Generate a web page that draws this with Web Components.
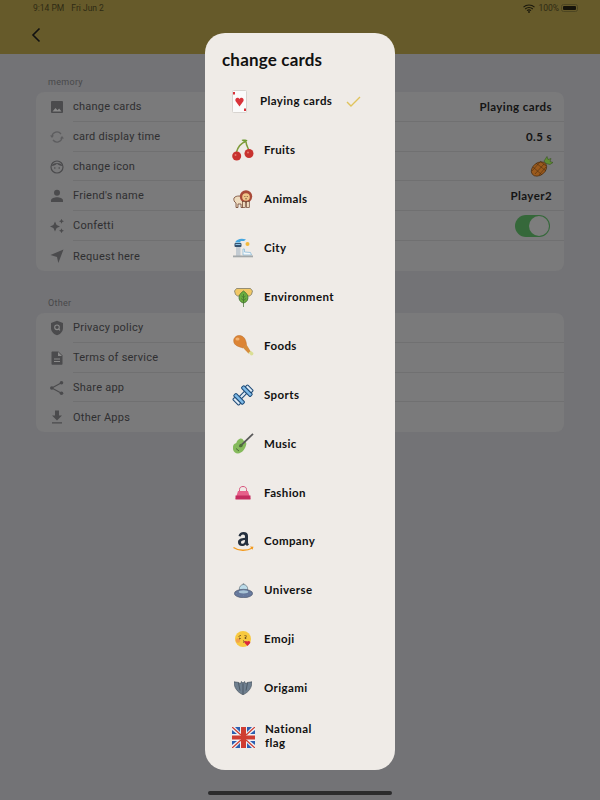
<!DOCTYPE html>
<html><head><meta charset="utf-8"><style>
html,body{margin:0;padding:0;width:600px;height:800px;overflow:hidden;background:#737376}
body{font-family:Roboto,"Liberation Sans",sans-serif}
</style></head><body>
<settings-screen>
  <settings-section title="memory">
    <settings-row icon="image" label="change cards" value="Playing cards"></settings-row>
    <settings-row icon="sync" label="card display time" value="0.5 s"></settings-row>
    <settings-row icon="face" label="change icon" extra="pineapple"></settings-row>
    <settings-row icon="person" label="Friend's name" value="Player2"></settings-row>
    <settings-row icon="sparkle" label="Confetti" extra="toggle"></settings-row>
    <settings-row icon="nav" label="Request here" last></settings-row>
  </settings-section>
  <settings-section title="Other">
    <settings-row icon="shield" label="Privacy policy"></settings-row>
    <settings-row icon="doc" label="Terms of service"></settings-row>
    <settings-row icon="share" label="Share app"></settings-row>
    <settings-row icon="download" label="Other Apps" last></settings-row>
  </settings-section>
</settings-screen>
<card-picker heading="change cards">
  <picker-option icon="card" gap="13" checked>Playing cards</picker-option>
  <picker-option icon="cherry">Fruits</picker-option>
  <picker-option icon="lion">Animals</picker-option>
  <picker-option icon="city">City</picker-option>
  <picker-option icon="leaf">Environment</picker-option>
  <picker-option icon="chicken">Foods</picker-option>
  <picker-option icon="dumbbell">Sports</picker-option>
  <picker-option icon="guitar">Music</picker-option>
  <picker-option icon="bag">Fashion</picker-option>
  <picker-option icon="amazon">Company</picker-option>
  <picker-option icon="ufo">Universe</picker-option>
  <picker-option icon="kiss">Emoji</picker-option>
  <picker-option icon="bat">Origami</picker-option>
  <picker-option icon="flag" wrap>National flag</picker-option>
</card-picker>
<script>
const G='#4b4b4d';
const rowIcons={
image:`<svg width="16" height="16" viewBox="0 0 16 16"><rect x="2" y="2" width="12" height="12" rx="1" fill="${G}"/><path d="M3.500 12.500 6.500 9l2 2.200 1.600-1.600 2.400 2.900z" fill="#8a8a8a"/></svg>`,
sync:`<svg width="16" height="16" viewBox="0 0 16 16" fill="none" stroke="#5d5d5f" stroke-width="1.300"><path d="M3 7.500A5 5 0 0 1 12 5"/><path d="M13 8.500A5 5 0 0 1 4 11"/><path d="M1 6.500h4L3 9zM15 9.500h-4l2-2.500z" fill="#5d5d5f" stroke="none"/></svg>`,
face:`<svg width="16" height="16" viewBox="0 0 16 16" fill="none" stroke="${G}" stroke-width="1.200"><circle cx="8" cy="8" r="6"/><path d="M2.200 7C4 3 12 3 13.800 7 11 7 9 5.700 8 4.500 7 5.700 5 7 2.200 7z" fill="${G}" stroke="none"/><circle cx="5.800" cy="9" r=".8" fill="${G}" stroke="none"/><circle cx="10.200" cy="9" r=".8" fill="${G}" stroke="none"/></svg>`,
person:`<svg width="16" height="16" viewBox="0 0 16 16" fill="${G}"><circle cx="8" cy="4.800" r="3"/><path d="M2 14v-1.500C2 10.300 5.500 9.300 8 9.300s6 1 6 3.200V14z"/></svg>`,
sparkle:`<svg width="16" height="16" viewBox="0 0 16 16" fill="${G}"><path d="M6 3.500 7.600 7 11 8.500 7.600 10 6 13.500 4.400 10 1 8.500 4.400 7z"/><path d="M12.500 .8l.8 1.700 1.700.8-1.700.8-.8 1.700-.8-1.700-1.700-.8 1.700-.8zM12.500 10.300l.8 1.700 1.700.8-1.700.8-.8 1.700-.8-1.700-1.700-.8 1.700-.8z"/></svg>`,
nav:`<svg width="16" height="16" viewBox="0 0 16 16" fill="${G}"><path d="M14.500 1.500 9.300 15 8 9 1.500 7z"/></svg>`,
shield:`<svg width="16" height="16" viewBox="0 0 16 16"><path d="M8 .8 14 3v5c0 3.500-2.600 6.200-6 7.200C4.600 14.200 2 11.500 2 8V3z" fill="${G}"/><circle cx="8" cy="7.300" r="2.300" fill="none" stroke="#8a8a8a" stroke-width="1.100"/><path d="M9.600 9l1.400 1.400" stroke="#8a8a8a" stroke-width="1.100"/></svg>`,
doc:`<svg width="16" height="16" viewBox="0 0 16 16"><path d="M3.500 1.500h6L13.500 5.500v8.300c0 .7-.5 1-1 1h-9c-.5 0-1-.4-1-1V2.500c0-.6.500-1 1-1z" fill="${G}"/><path d="M5 9h6M5 11.500h6" stroke="#8a8a8a" stroke-width="1.100"/><path d="M9 2v4h4" fill="#8a8a8a"/></svg>`,
share:`<svg width="16" height="16" viewBox="0 0 16 16" fill="${G}"><circle cx="12.500" cy="2.800" r="1.800"/><circle cx="12.500" cy="13.200" r="1.800"/><circle cx="2.800" cy="8" r="1.800"/><path d="M2.800 8 12.500 2.800M2.800 8l9.700 5.200" stroke="${G}" stroke-width="1.100"/></svg>`,
download:`<svg width="16" height="16" viewBox="0 0 16 16" fill="${G}"><path d="M6 1.500h4v5h3L8 11.500 3 6.500h3zM3 13.200h10v1.300H3z"/></svg>`
};
const pickIcons={
card:`<svg width="15" height="23" viewBox="0 0 15 23"><rect x=".5" y=".5" width="14" height="22" rx="1" fill="#fbfbfb" stroke="#d8d4d0"/><path d="M7.500 16.500 3.500 11C2.500 8 6 6.500 7.500 9 9 6.500 12.500 8 11.500 11z" fill="#d9333a"/><rect x="1" y="2" width="2" height="2.500" fill="#d9333a"/><rect x="12" y="18.500" width="2" height="2.500" fill="#d9333a"/></svg>`,
cherry:`<svg width="22" height="22" viewBox="0 0 22 22" fill="none"><path d="M14 2.500C9 4 6 8 4.500 13" stroke="#7f9b3a" stroke-width="1.500"/><path d="M14 2.500c0 4 2 6 3.500 10" stroke="#7f9b3a" stroke-width="1.500"/><path d="M9.500 1c2-.8 5-.6 6 .5-1.500 2-4.500 1.500-6-.5z" fill="#6f9c35"/><circle cx="4.700" cy="17" r="4.500" fill="#c8322f"/><circle cx="17" cy="14.500" r="4.500" fill="#c8322f"/><circle cx="3.500" cy="16" r="1" fill="#e47a6e"/><circle cx="16" cy="13.500" r="1" fill="#e47a6e"/></svg>`,
lion:`<svg width="20" height="18" viewBox="0 0 20 18"><path d="M1 8c1-1.500 3-2 5-2h5v8h-1v3.500H8V14H5v3.500H3V13C1 12 .5 9.500 1 8z" fill="#efdcc0" stroke="#6e4230" stroke-width=".8"/><circle cx="13" cy="6.500" r="6.200" fill="#a84a38"/><circle cx="13" cy="7" r="3.800" fill="#efc58a"/><rect x="9.500" y="11.500" width="2.800" height="6" fill="#efdcc0" stroke="#6e4230" stroke-width=".7"/><rect x="13.500" y="11.500" width="2.800" height="6" fill="#efdcc0" stroke="#6e4230" stroke-width=".7"/><path d="M11.500 6.500h.8M13.800 6.500h.8M12.400 8.800h1.300" stroke="#4d2e20" stroke-width=".9"/></svg>`,
city:`<svg width="20" height="20" viewBox="0 0 20 20"><path d="M2 4.500C4 .5 9 0 13 1.500l-2 1.500H7.500v1.500z" fill="#45a6e0"/><rect x="1.500" y="5" width="7" height="4" rx="1" fill="#34506e"/><rect x="2.500" y="6" width="5" height="1" fill="#8fc4e6"/><rect x="3" y="9" width="4.500" height="9" fill="#c3cbd2"/><circle cx="14.500" cy="6" r="2" fill="#f5b93a"/><path d="M10 11h1.500v3l6 .5 1 2.500H10z" fill="#f4f8fa" stroke="#7fb5d6" stroke-width=".7"/><rect y="17.500" width="20" height="1.800" fill="#a3a8aa"/></svg>`,
leaf:`<svg width="19" height="19" viewBox="0 0 19 19"><path d="M2.500.5h14l2 2.500-1 3.500-2 1.500h-12L1.500 6.500.5 3z" fill="#f1c866" stroke="#7d7a66" stroke-width=".8"/><path d="M9.500 3c3 2 5 4.500 4.300 8-.5 2.300-2.300 3.500-4.300 4-2-.5-3.800-1.700-4.300-4C4.500 7.500 6.500 5 9.500 3z" fill="#6bae3f" stroke="#3d6f2e" stroke-width=".8"/><path d="M9.500 6v13M9.500 9.500 7.500 8M9.500 9.500l2-1.500M9.500 12.500l-2.500-2M9.500 12.500l2.500-2" stroke="#3d6f2e" stroke-width=".7" fill="none"/></svg>`,
chicken:`<svg width="21" height="21" viewBox="0 0 21 21"><path d="M.7 6C.5 2 4.500-.3 8 .8 12 2 13 6 13.500 9.500L10 13C6 11.500 1 11 .7 6z" fill="#dc8435" stroke="#b86a28" stroke-width=".5"/><path d="M10 12.800 13.500 9.500l4.500 7.500-2.500 1.500z" fill="#d68c3c"/><ellipse cx="4.500" cy="4" rx="2" ry="1.500" fill="#f2b272"/><path d="M15.500 17.500l2.500-1.500 2.500 2-.5 2-2 .5z" fill="#dadf95"/></svg>`,
dumbbell:`<svg width="22" height="22" viewBox="0 0 21 21"><g transform="rotate(-45 10.500 10.500)" stroke="#1e4b78" stroke-width="1"><rect x="7" y="9" width="7" height="3" fill="#dfeaf4"/><rect x="3.500" y="4.500" width="3.500" height="12" rx="1" fill="#7fbbe8"/><rect x="14" y="4.500" width="3.500" height="12" rx="1" fill="#7fbbe8"/><rect x=".5" y="6.500" width="3" height="8" rx="1" fill="#dfeaf4"/><rect x="17.500" y="6.500" width="3" height="8" rx="1" fill="#dfeaf4"/></g></svg>`,
guitar:`<svg width="21" height="21" viewBox="0 0 21 21"><path d="M6.800 5.800c1.800-.8 3.200.3 3.500 1.800 1.800.2 3.300 1.500 3 3.700C12.600 15.500 9 20.500 5 20.500 1.500 20.500-.5 17-.1 14c.3-2.300 1.800-3.700 3.400-4 .3-1.800 1.700-3.400 3.500-4.200z" fill="#85ba5c"/><path d="M20 .8 6.500 13.800" stroke="#59595a" stroke-width="1.800"/><circle cx="8" cy="12.500" r="1.700" fill="#4c6f37"/><path d="M3 15.500l3 2.500" stroke="#4c6f37" stroke-width="1"/></svg>`,
bag:`<svg width="16" height="14" viewBox="0 0 16 14"><path d="M4.500 5V3.500C4.500 1.500 6 .5 8 .5s3.500 1 3.500 3V5" fill="none" stroke="#d7527b" stroke-width="1"/><path d="M3 5h10l2.500 8H.5z" fill="#e6608a"/><path d="M.5 9.500h15V13.500H.5z" fill="#c42c5f"/></svg>`,
amazon:`<svg width="21" height="21" viewBox="0 0 21 21"><path d="M5.500 5C6 2.500 8 1 10.500 1 13.500 1 15 2.500 15 5v6.500c0 .8.400 1.300 1 2l-2 1.500c-.7-.6-1-1-1.300-1.500-1 1-2.200 1.500-3.700 1.500-2.500 0-4-1.500-4-3.700 0-3 2.600-4 7-4.500V5.500c0-1.300-.8-2-2-2s-2 .7-2.300 2zM12 9C9.500 9.300 8 9.800 8 11.200c0 1 .6 1.600 1.600 1.600 1.600 0 2.400-1.500 2.400-3.800z" fill="#242f3e"/><path d="M.5 16.500c5 3.500 13 3.700 19 .5" fill="none" stroke="#f39a1e" stroke-width="1.400"/><path d="M17 15.500l3.500.2-1 3z" fill="#f39a1e"/></svg>`,
ufo:`<svg width="19" height="15" viewBox="0 0 19 15"><circle cx="9.500" cy="1.200" r=".9" fill="#7e8a93"/><ellipse cx="9.500" cy="6" rx="4.200" ry="4.500" fill="#bcdcea" stroke="#67757f" stroke-width=".7"/><ellipse cx="9.500" cy="10.500" rx="9.200" ry="4.200" fill="#66789c" stroke="#4b5569" stroke-width=".6"/><ellipse cx="9.500" cy="8.800" rx="4.800" ry="1.600" fill="#a8c3d6"/><path d="M2.500 10.500h.1M5.500 12h.1M9.500 12.500h.1M13.500 12h.1M16.500 10.500h.1" stroke="#d8dfe8" stroke-width="1.200"/></svg>`,
kiss:`<svg width="16" height="16" viewBox="0 0 16 16"><circle cx="8" cy="8" r="8" fill="#f8c940"/><circle cx="3" cy="9.500" r="2.200" fill="#f2a24c"/><path d="M3.500 5.500l2.500-1.200M9.500 4.500l2.500.8M4 7l1.500.5-1.500.5" stroke="#6a4a20" stroke-width=".8" fill="none"/><circle cx="10.500" cy="7" r=".9" fill="#6a4a20"/><path d="M8 9.500l1.500 1-1.500 1" stroke="#6a4a20" stroke-width=".8" fill="none"/><path d="M12.500 15l-3-3.300c-.7-1.500 1.500-2.500 2.700-1.200 1.200-1.300 3.500-.3 3 1.500z" fill="#d9263c"/></svg>`,
bat:`<svg width="18" height="14" viewBox="0 0 18 14"><path d="M0 .8 5 1.500 6.500 3 7.300.5 9 2l1.700-1.500.8 2.500L13 1.500l5-.7c0 5-2.500 10-9 13C2.500 10.800 0 5.800 0 .8z" fill="#6f7f8f" stroke="#3e4955" stroke-width=".6"/><path d="M4.500 2l1.500 7.500M13.500 2 12 9.500M9 2.500V13.500" stroke="#3e4955" stroke-width=".7"/></svg>`,
flag:`<svg width="23" height="21" viewBox="0 0 23 21"><rect width="23" height="21" fill="#eef0f4"/><path d="M3 0l5 5V0zM15 0v5l5-5zM0 3l5 4H0zM23 3l-5 4h5zM0 14h5l-5 4zM23 14h-5l5 4zM8 21v-5l-5 5zM15 21v-5l5 5z" fill="#2c5fb0"/><path d="M0 0l9 8M23 0l-9 8M0 21l9-8M23 21l-9-8" stroke="#cf3d32" stroke-width="1.300"/><path d="M9 0h5v21H9zM0 8.500h23v4H0z" fill="#cf3d32"/></svg>`
};
const sheet=(c)=>`<style>${c}</style>`;

class SettingsScreen extends HTMLElement{constructor(){super();this.attachShadow({mode:'open'}).innerHTML=sheet(`
:host{display:block;width:600px;height:800px;position:relative;background:#737376;color:#2b2b2c}
.top{background:#665a2a;height:54px;display:flex;flex-direction:column;box-sizing:border-box}
.status{height:16px;padding:0 22px 0 33px;display:flex;align-items:center;font-size:8.500px;color:#2e2a14}
.status .sp{flex:1}.status .d{margin-left:7px}
.nav{flex:1;display:flex;align-items:center;position:relative;padding:0 0 0 31px}
.nav b{position:absolute;left:0;right:0;text-align:center;font:bold 16px "Lato",sans-serif;color:#1a180c;top:13px}
.body{padding:24px 36px 0;display:flex;flex-direction:column;gap:28px}
.home{position:absolute;left:208px;top:791px;width:184px;height:4px;border-radius:2px;background:#2b2b2c}
.batt{display:inline-flex;width:17px;height:8px;box-sizing:border-box;border:1px solid #4d4622;border-radius:2.500px;padding:1px;margin-left:2px}
.batt i{flex:1;background:#15130a;border-radius:1px}
`)+`<div class="top"><div class="status"><span>9:14 PM</span><span class="d">Fri Jun 2</span><span class="sp"></span>
<svg width="12" height="9" viewBox="0 0 12 9" style="margin-right:3px"><path d="M.5 3.200a8 8 0 0 1 11 0M2.200 5a5.500 5.500 0 0 1 7.600 0M4 6.700a3 3 0 0 1 4 0" fill="none" stroke="#1a180c" stroke-width="1.100"/><circle cx="6" cy="8" r=".9" fill="#1a180c"/></svg>
<span>100%</span><span class="batt"><i></i></span></div>
<div class="nav"><svg width="10" height="16" viewBox="0 0 10 16"><path d="M8.500 1.500 2 8l6.500 6.500" fill="none" stroke="#111" stroke-width="1.600"/></svg><b>Settings</b></div></div>
<div class="body"><slot></slot></div><div class="home"></div>`;}}

class SettingsSection extends HTMLElement{constructor(){super();this.attachShadow({mode:'open'});}
connectedCallback(){this.shadowRoot.innerHTML=sheet(`
:host{display:block}
.t{font-size:9px;letter-spacing:.3px;color:#48484a;height:14px;line-height:9px;padding-left:12px}
.c{background:#7a7a7b;border-radius:8px;overflow:hidden}
`)+`<div class="t">${this.getAttribute('title')}</div><div class="c"><slot></slot></div>`;this.removeAttribute('title');}}

class SettingsRow extends HTMLElement{constructor(){super();this.attachShadow({mode:'open'});}
connectedCallback(){const v=this.getAttribute('value'),x=this.getAttribute('extra');
let right='';
if(v)right=`<span class="v">${v}</span>`;
if(x==='pineapple')right=`<svg width="23" height="21" viewBox="0 0 23 21" style="margin-right:-3px"><path d="M14 5 17 .5l1 3 3-1-1 3 3 1-3 2-4-1z" fill="#5f8d34" stroke="#2f4a1a" stroke-width=".5"/><ellipse cx="9" cy="13" rx="8.500" ry="6.200" transform="rotate(-38 9 13)" fill="#9a5a1d" stroke="#3f260e" stroke-width=".6"/><path d="M3 11l9 8M6 7l10 8M10 5l6 5M2 15l8-9M5 18l9-10M9 19l7-8" stroke="#3f260e" stroke-width=".5"/></svg>`;
if(x==='toggle')right=`<span class="tg"><i></i></span>`;
this.shadowRoot.innerHTML=sheet(`
:host{display:block;height:29.830px}
.r{height:100%;display:flex;align-items:center;padding:0 14px 0 13px;box-sizing:border-box}
.i{width:16px;height:16px;flex:none;margin-right:8px;display:flex}
.m{flex:1;height:100%;display:flex;align-items:center;justify-content:space-between;border-bottom:1px solid #707071;box-sizing:border-box;margin-right:-14px;padding-right:14px;min-width:0}
.l{font:11px Roboto,sans-serif;letter-spacing:.24px;color:#2f2f31}
.v{font:bold 11.500px "Lato",sans-serif;letter-spacing:.42px;color:#141414;margin-right:-2px}
.tg{display:flex;width:35px;height:22px;background:#35683a;border-radius:11px;padding:1px;box-sizing:border-box;justify-content:flex-end}
.tg i{width:20px;height:20px;border-radius:50%;background:#7d7d7d}
${this.hasAttribute('last')?'.m{border-bottom:0}':''}
`)+`<div class="r"><span class="i">${rowIcons[this.getAttribute('icon')]}</span><div class="m"><span class="l">${this.getAttribute('label')}</span>${right}</div></div>`;}}

class CardPicker extends HTMLElement{constructor(){super();this.attachShadow({mode:'open'});}
connectedCallback(){this.shadowRoot.innerHTML=sheet(`
:host{display:block;position:absolute;left:205px;top:33px;width:190px;height:737px;background:#efebe7;border-radius:20px;box-sizing:border-box;padding:17px 0 0 17px}
h2{margin:0;font:bold 17px/20px "Lato",sans-serif;letter-spacing:.18px;color:#111;height:20px}
.l{margin-top:7px;padding-left:10px}
`)+`<h2>${this.getAttribute('heading')}</h2><div class="l"><slot></slot></div>`;}}

class PickerOption extends HTMLElement{constructor(){super();this.attachShadow({mode:'open'});}
connectedCallback(){const chk=this.hasAttribute('checked'),wr=this.hasAttribute('wrap'),gap=this.getAttribute('gap')||10;
this.shadowRoot.innerHTML=sheet(`
:host{display:block;height:48.900px}
.o{height:100%;display:flex;align-items:center;gap:${gap}px}
.ic{display:flex;flex:none;width:${chk?15:wr?23:22}px;justify-content:center}
.t{font:bold 11.500px/14px "Lato",sans-serif;letter-spacing:.4px;color:#111;${wr?'width:60px;margin-top:-2px;':''}}
.k{margin-left:1px;display:flex}
`)+`<div class="o"><span class="ic">${pickIcons[this.getAttribute('icon')]}</span><span class="t"><slot></slot></span>${chk?'<span class="k"><svg width="15" height="11" viewBox="0 0 15 11"><path d="M1 6l4 4L14 1" fill="none" stroke="#e0c35c" stroke-width="1.400"/></svg></span>':''}</div>`;}}

customElements.define('settings-screen',SettingsScreen);
customElements.define('settings-section',SettingsSection);
customElements.define('settings-row',SettingsRow);
customElements.define('card-picker',CardPicker);
customElements.define('picker-option',PickerOption);
</script>
</body></html>
